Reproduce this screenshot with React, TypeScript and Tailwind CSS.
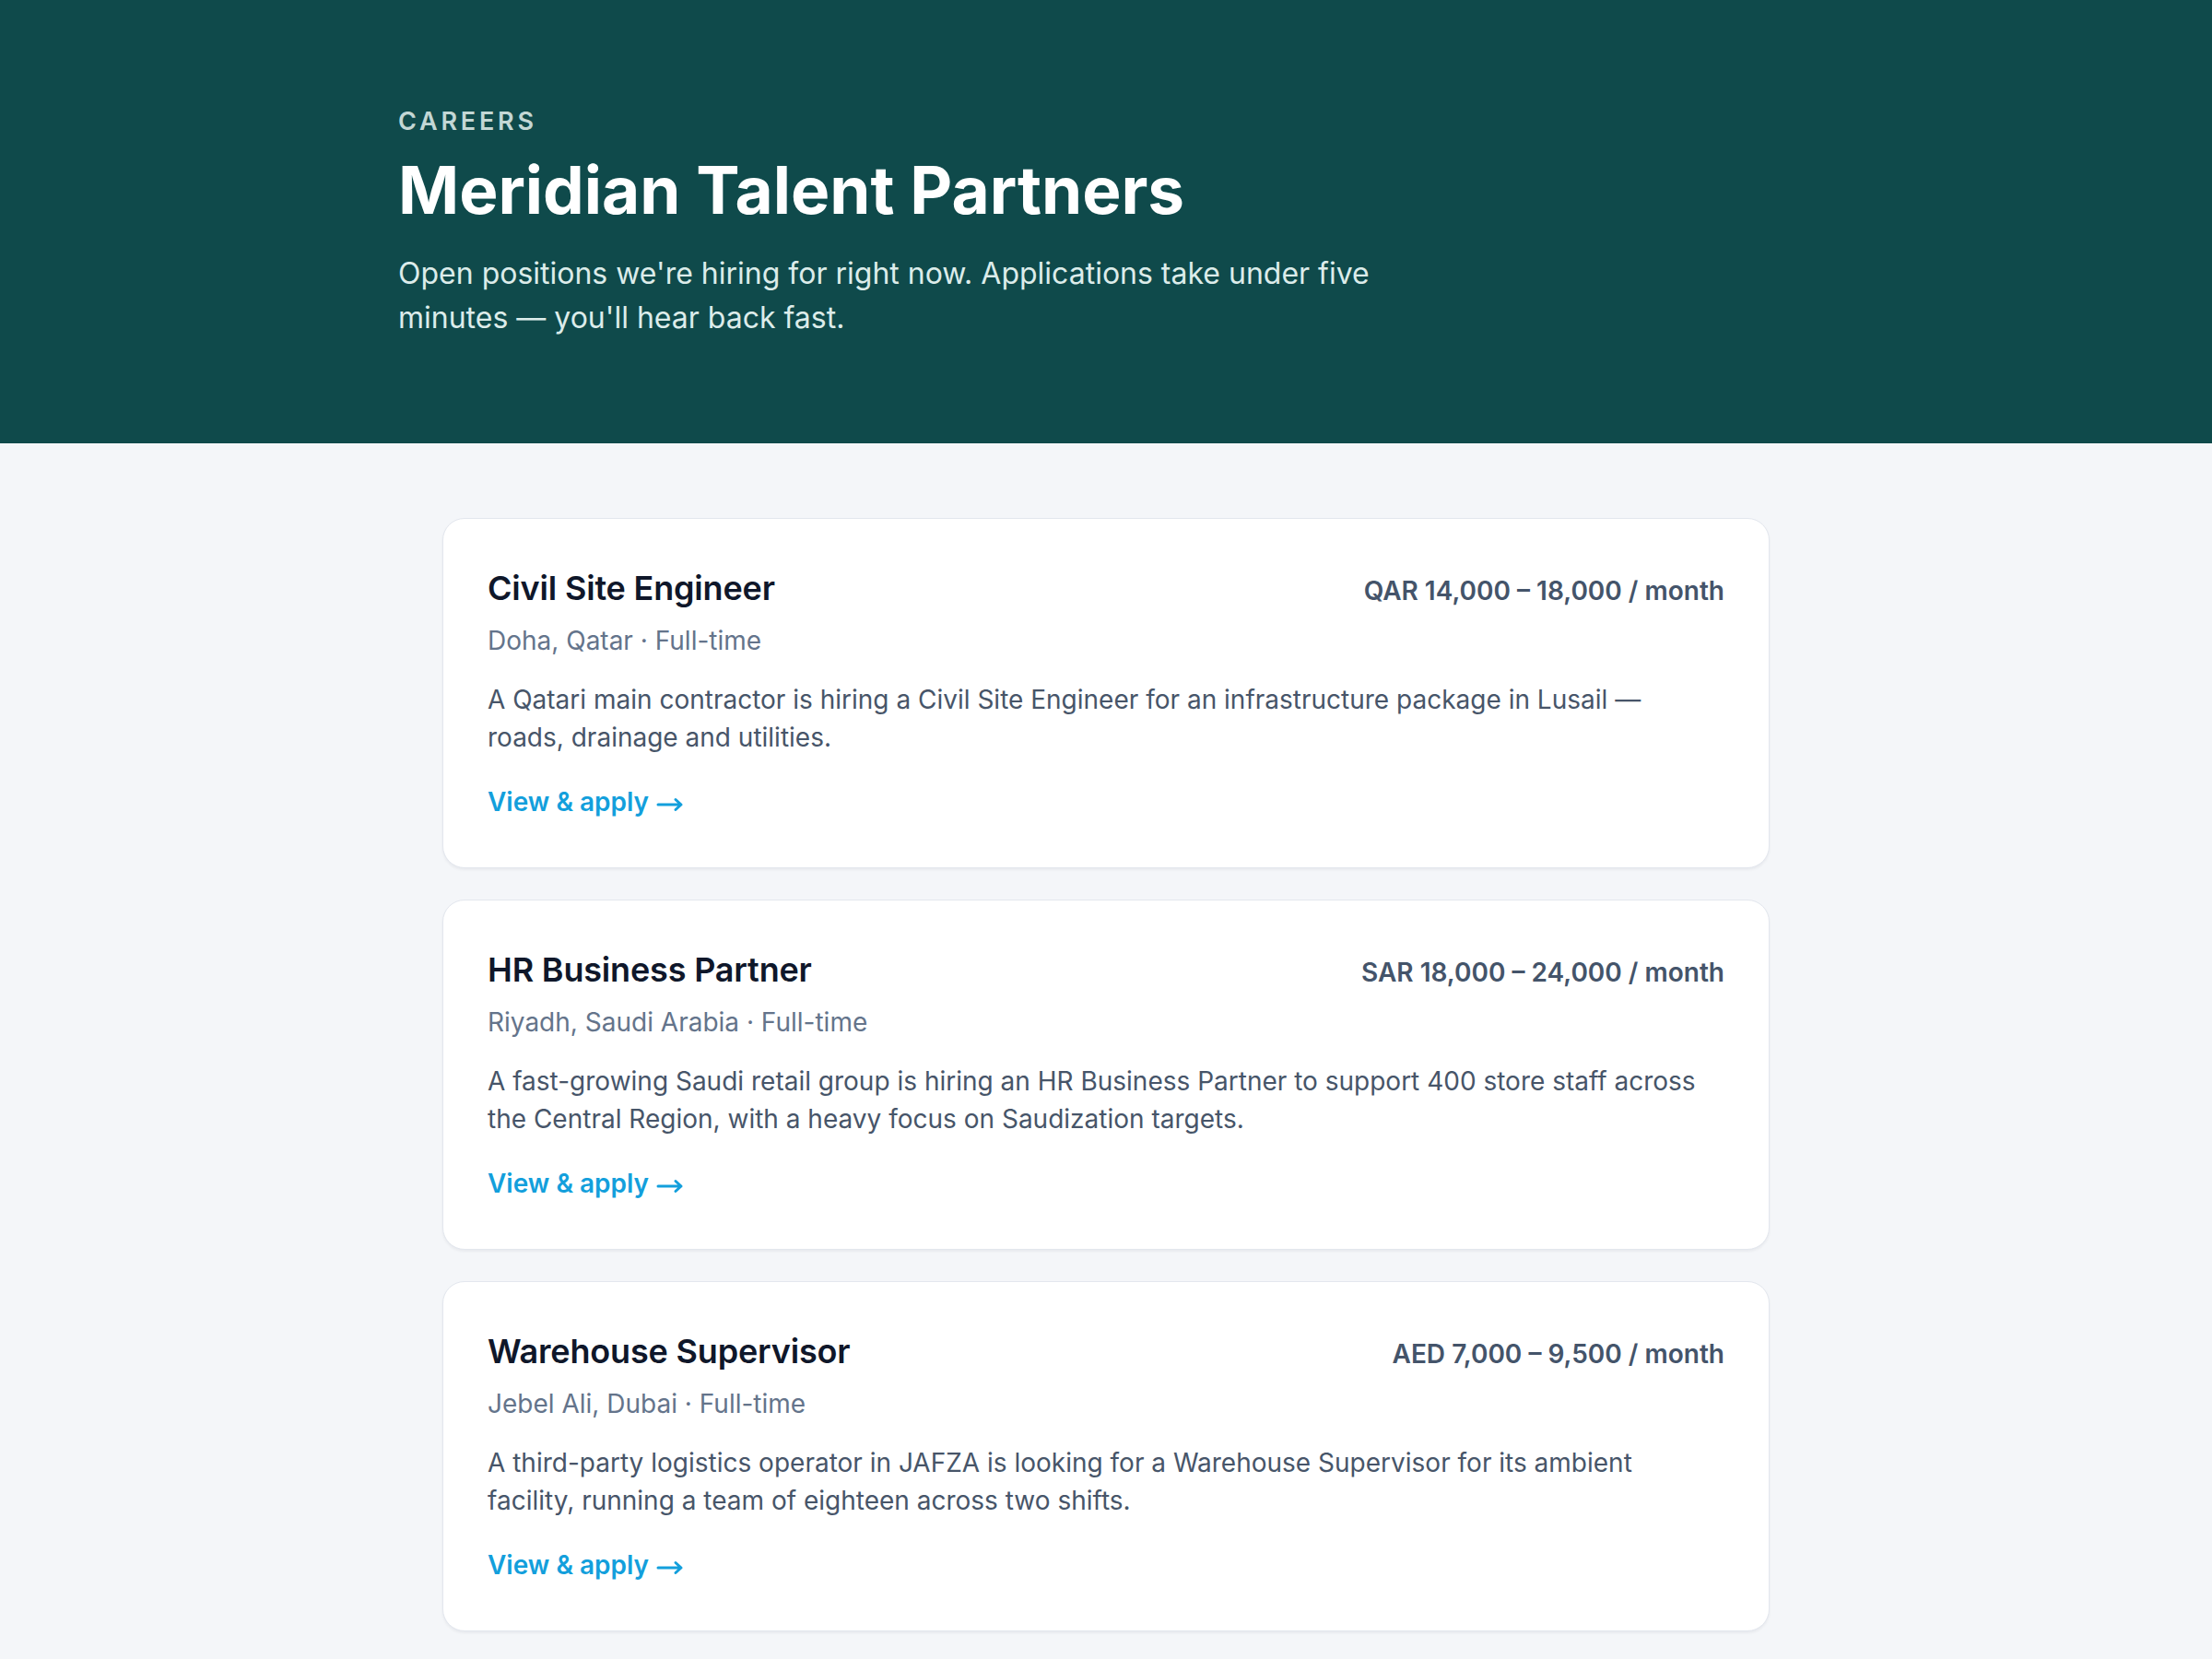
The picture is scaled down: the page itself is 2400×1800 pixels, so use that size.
const jobs = [
  {
    title: "Civil Site Engineer",
    salary: "QAR 14,000 – 18,000 / month",
    meta: "Doha, Qatar · Full-time",
    blurb:
      "A Qatari main contractor is hiring a Civil Site Engineer for an infrastructure package in Lusail — roads, drainage and utilities.",
  },
  {
    title: "HR Business Partner",
    salary: "SAR 18,000 – 24,000 / month",
    meta: "Riyadh, Saudi Arabia · Full-time",
    blurb:
      "A fast-growing Saudi retail group is hiring an HR Business Partner to support 400 store staff across the Central Region, with a heavy focus on Saudization targets.",
  },
  {
    title: "Warehouse Supervisor",
    salary: "AED 7,000 – 9,500 / month",
    meta: "Jebel Ali, Dubai · Full-time",
    blurb:
      "A third-party logistics operator in JAFZA is looking for a Warehouse Supervisor for its ambient facility, running a team of eighteen across two shifts.",
  },
];

type Job = (typeof jobs)[number];

function Arrow() {
  return (
    <svg
      width="30"
      height="16"
      viewBox="0 0 30 16"
      fill="none"
      stroke="currentColor"
      strokeWidth="3"
      strokeLinecap="round"
      strokeLinejoin="round"
      className="ml-[8px] inline-block align-[-1px]"
    >
      <path d="M2 8h25M21 2.5 27 8l-6 5.5" />
    </svg>
  );
}

function JobCard({ job }: { job: Job }) {
  return (
    <article className="rounded-[24px] border-[1.5px] border-[#e3e7ee] bg-white px-[48px] pb-[50px] pt-[48px] shadow-[0_2px_3px_rgba(15,23,42,0.05)]">
      <div className="flex items-baseline justify-between gap-6">
        <h2 className="text-[36px] font-semibold leading-[54px] tracking-[-0.005em] text-[#0f172a]">
          {job.title}
        </h2>
        <span className="text-[28px] font-semibold text-[#44546a]">{job.salary}</span>
      </div>
      <p className="mt-[10px] text-[28px] leading-[40.5px] text-[#64748b]">{job.meta}</p>
      <p className="mt-[24px] max-w-[1325px] text-[28px] leading-[40.5px] text-[#475569]">
        {job.blurb}
      </p>
      <a
        href="#"
        className="mt-[30px] inline-block text-[28px] font-semibold leading-[40.5px] text-[#139fdc]"
      >
        View &amp; apply
        <Arrow />
      </a>
    </article>
  );
}

export default function App() {
  return (
    <div className="min-h-screen bg-[#f4f6f9] font-['Inter','Liberation_Sans',sans-serif]">
      <header className="bg-[#0f4a4b] py-[112px]">
        <div className="mx-auto max-w-[1536px]">
          <p className="text-[27px] font-semibold leading-[40.5px] tracking-[0.14em] text-[#c3d7d5]">
            CAREERS
          </p>
          <h1 className="mt-[13px] text-[71px] font-bold leading-[80px] text-white">
            Meridian Talent Partners
          </h1>
          <p className="mt-[27px] max-w-[1100px] text-[32px] leading-[48px] text-[#dcecea]">
            Open positions we're hiring for right now. Applications take under five minutes — you'll
            hear back fast.
          </p>
        </div>
      </header>
      <main className="mx-auto flex max-w-[1440px] flex-col gap-[34px] pb-[84px] pt-[81px]">
        {jobs.map((job) => (
          <JobCard key={job.title} job={job} />
        ))}
      </main>
    </div>
  );
}
